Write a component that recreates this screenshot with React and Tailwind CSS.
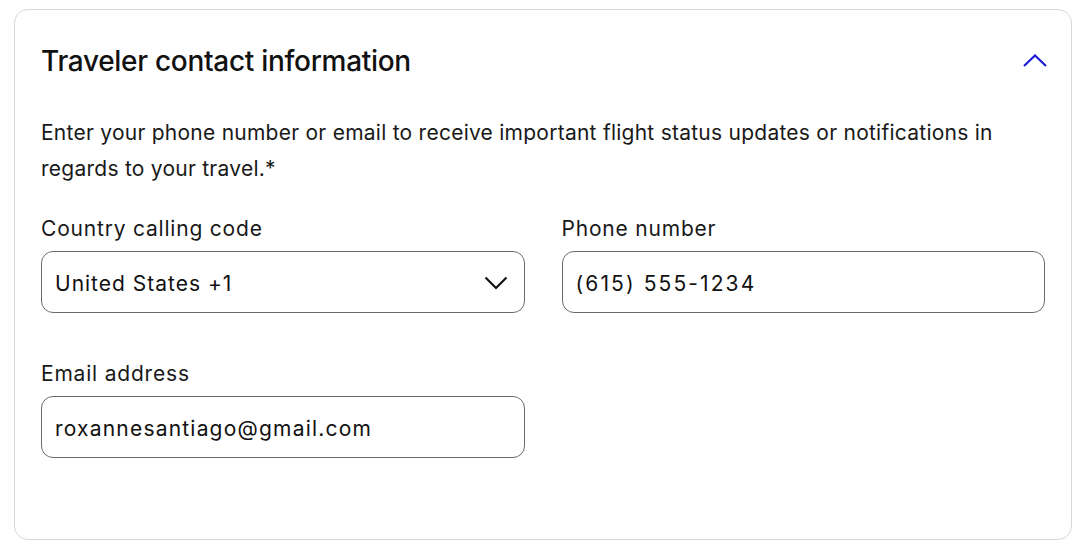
import React from "react";

export default function App() {
  return (
    <div className="min-h-screen bg-white pt-[9px] pl-[14px] pr-[12px] pb-[6px]" style={{ fontFamily: "Inter, 'Noto Sans', sans-serif" }}>
      <div className="rounded-[14px] border border-[#d9d9d9] bg-white px-[26px] pt-[30px] pb-[81px]">
        <div className="flex items-center justify-between">
          <h2 className="text-[28px] font-medium tracking-[-0.3px] text-[#111]">
            Traveler contact information
          </h2>
          <svg width="24" height="13" viewBox="0 0 24 13" className="-mr-[2px] mb-[2px]">
            <path d="M1 12 L12 1.5 L23 12" fill="none" stroke="#1c1cd6" strokeWidth="2.2" />
          </svg>
        </div>

        <p className="mt-[33px] text-[21px] leading-[36px] text-[#191919] tracking-[0.25px]">
          Enter your phone number or email to receive important flight status updates or notifications in regards to your travel.*
        </p>

        <div className="mt-[27px] grid grid-cols-2 gap-x-[37px]">
          <div>
            <label className="block text-[21px] leading-[30px] tracking-[0.8px] text-[#191919]">Country calling code</label>
            <div className="mt-[7px] flex h-[62px] items-center justify-between rounded-[12px] border border-[#6b6b6b] px-[13px]">
              <span className="pt-[3px] text-[21px] tracking-[1px] text-[#111]">United States +1</span>
              <svg width="24" height="14" viewBox="0 0 24 14" className="mr-[3px] mt-[2px]">
                <path d="M1.5 1.5 L12 12 L22.5 1.5" fill="none" stroke="#111" strokeWidth="2.2" />
              </svg>
            </div>
          </div>
          <div>
            <label className="block text-[21px] leading-[30px] tracking-[0.8px] text-[#191919]">Phone number</label>
            <div className="mt-[7px] flex h-[62px] items-center rounded-[12px] border border-[#6b6b6b] px-[13px]">
              <span className="pt-[3px] text-[21px] tracking-[2.1px] text-[#111]">(615) 555-1234</span>
            </div>
          </div>
        </div>

        <div className="mt-[46px] grid grid-cols-2 gap-x-[37px]">
          <div>
            <label className="block text-[21px] leading-[30px] tracking-[0.8px] text-[#191919]">Email address</label>
            <div className="mt-[7px] flex h-[62px] items-center rounded-[12px] border border-[#6b6b6b] px-[13px]">
              <span className="pt-[3px] text-[21px] tracking-[1.2px] text-[#111]">roxannesantiago@gmail.com</span>
            </div>
          </div>
        </div>
      </div>
    </div>
  );
}
